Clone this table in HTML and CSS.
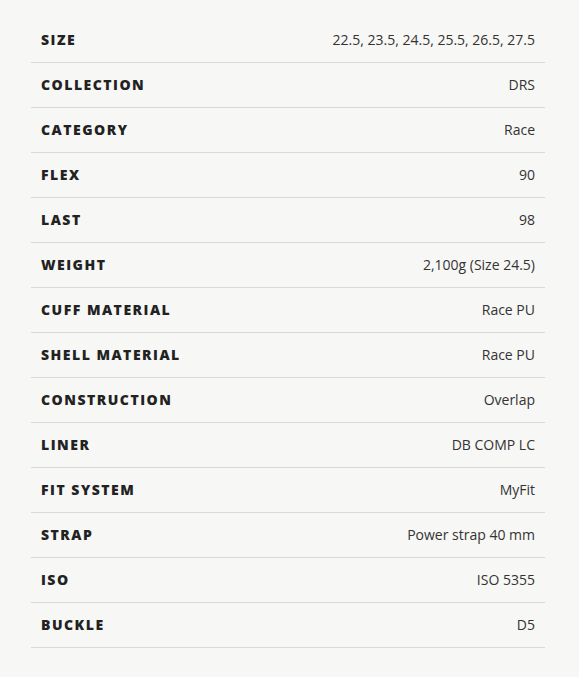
FILE: index.html
```html
<!DOCTYPE html>
<html>
<head>
<meta charset="utf-8">
<link rel="stylesheet" href="styles.css">
</head>
<body>
<div class="specs">
  <div class="row"><span class="label">SIZE</span><span class="value">22.5, 23.5, 24.5, 25.5, 26.5, 27.5</span></div>
  <div class="row"><span class="label">COLLECTION</span><span class="value">DRS</span></div>
  <div class="row"><span class="label">CATEGORY</span><span class="value">Race</span></div>
  <div class="row"><span class="label">FLEX</span><span class="value">90</span></div>
  <div class="row"><span class="label">LAST</span><span class="value">98</span></div>
  <div class="row"><span class="label">WEIGHT</span><span class="value">2,100g (Size 24.5)</span></div>
  <div class="row"><span class="label">CUFF MATERIAL</span><span class="value">Race PU</span></div>
  <div class="row"><span class="label">SHELL MATERIAL</span><span class="value">Race PU</span></div>
  <div class="row"><span class="label">CONSTRUCTION</span><span class="value">Overlap</span></div>
  <div class="row"><span class="label">LINER</span><span class="value">DB COMP LC</span></div>
  <div class="row"><span class="label">FIT SYSTEM</span><span class="value">MyFit</span></div>
  <div class="row"><span class="label">STRAP</span><span class="value">Power strap 40 mm</span></div>
  <div class="row"><span class="label">ISO</span><span class="value">ISO 5355</span></div>
  <div class="row"><span class="label">BUCKLE</span><span class="value">D5</span></div>
</div>
</body>
</html>
```
FILE: styles.css
```css
html, body {
  margin: 0;
  padding: 0;
  background: #f7f7f5;
}
body {
  font-family: "Open Sans", "Liberation Sans", sans-serif;
  padding: 18px 34px 0 31px;
}
.specs {
  display: flex;
  flex-direction: column;
}
.row {
  box-sizing: border-box;
  display: flex;
  justify-content: space-between;
  align-items: center;
  height: 45px;
  border-bottom: 1px solid #d9d9d7;
  padding: 0 10px 1px;
}
.label {
  font-weight: 800;
  font-size: 14px;
  letter-spacing: 1.5px;
  color: #222;
}
.value {
  font-size: 14px;
  color: #333;
}
```
